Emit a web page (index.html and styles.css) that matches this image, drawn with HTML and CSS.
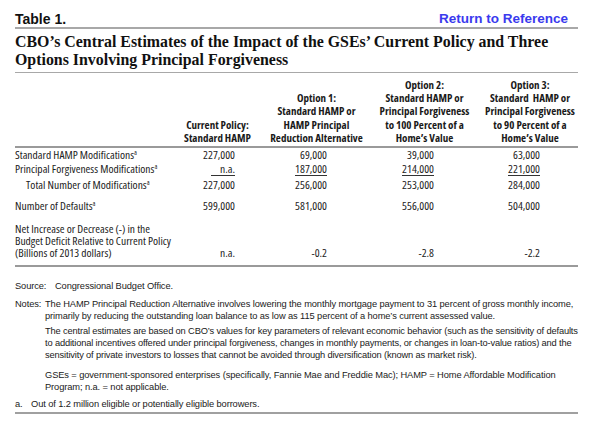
FILE: index.html
```html
<!DOCTYPE html>
<html>
<head>
<meta charset="utf-8">
<link rel="stylesheet" href="styles.css">
</head>
<body>
<div class="page">
  <div class="topbar">
    <span class="tablenum">Table 1.</span>
    <a class="return" href="#">Return to Reference</a>
  </div>
  <h1 class="title">CBO’s Central Estimates of the Impact of the GSEs’ Current Policy and Three Options Involving Principal Forgiveness</h1>

  <table class="data">
    <colgroup>
      <col class="c-label">
      <col class="c-1">
      <col class="c-2">
      <col class="c-3">
      <col class="c-4">
    </colgroup>
    <thead>
      <tr>
        <th></th>
        <th>Current Policy:<br>Standard HAMP</th>
        <th class="h2">Option 1:<br>Standard HAMP or<br>HAMP Principal<br>Reduction Alternative</th>
        <th>Option 2:<br>Standard HAMP or<br>Principal Forgiveness<br>to 100 Percent of a<br>Home’s Value</th>
        <th class="h4">Option 3:<br>Standard&nbsp; HAMP or<br>Principal Forgiveness<br>to 90 Percent of a<br>Home’s Value</th>
      </tr>
    </thead>
    <tbody>
      <tr class="r-first">
        <td class="lbl">Standard HAMP Modifications<sup>a</sup></td>
        <td class="n n1">227,000</td>
        <td class="n n2">69,000</td>
        <td class="n n3">39,000</td>
        <td class="n n4">63,000</td>
      </tr>
      <tr>
        <td class="lbl">Principal Forgiveness Modifications<sup>a</sup></td>
        <td class="n n1"><span class="ul">&nbsp;&nbsp;&nbsp;&nbsp;n.a.</span></td>
        <td class="n n2"><span class="ul">187,000</span></td>
        <td class="n n3"><span class="ul">214,000</span></td>
        <td class="n n4"><span class="ul">221,000</span></td>
      </tr>
      <tr class="r-total">
        <td class="lbl indent">Total Number of Modifications<sup>a</sup></td>
        <td class="n n1">227,000</td>
        <td class="n n2">256,000</td>
        <td class="n n3">253,000</td>
        <td class="n n4">284,000</td>
      </tr>
      <tr class="r-def">
        <td class="lbl">Number of Defaults<sup>a</sup></td>
        <td class="n n1">599,000</td>
        <td class="n n2">581,000</td>
        <td class="n n3">556,000</td>
        <td class="n n4">504,000</td>
      </tr>
      <tr class="r-net">
        <td class="lbl">Net Increase or Decrease (-) in the<br>Budget Deficit Relative to Current Policy<br>(Billions of 2013 dollars)</td>
        <td class="n n1">n.a.</td>
        <td class="n n2">-0.2</td>
        <td class="n n3">-2.8</td>
        <td class="n n4">-2.2</td>
      </tr>
    </tbody>
  </table>

  <div class="notes">
    <div class="note-row src">
      <span class="note-key src-key">Source:</span>
      <span class="note-body">Congressional Budget Office.</span>
    </div>
    <div class="note-row notes-main">
      <span class="note-key">Notes:</span>
      <div class="note-body">
        <p class="p1">The HAMP Principal Reduction Alternative involves lowering the monthly mortgage payment to 31 percent of gross monthly income,<br>primarily by reducing the outstanding loan balance to as low as 115 percent of a home’s current assessed value.</p>
        <p class="p2">The central estimates are based on CBO’s values for key parameters of relevant economic behavior (such as the sensitivity of defaults<br>to additional incentives offered under principal forgiveness, changes in monthly payments, or changes in loan-to-value ratios) and the<br>sensitivity of private investors to losses that cannot be avoided through diversification (known as market risk).</p>
        <p class="p3">GSEs = government-sponsored enterprises (specifically, Fannie Mae and Freddie Mac); HAMP = Home Affordable Modification<br>Program; n.a. = not applicable.</p>
      </div>
    </div>
    <div class="note-row foot">
      <span class="foot-key">a.</span>
      <span class="note-body">Out of 1.2 million eligible or potentially eligible borrowers.</span>
    </div>
  </div>
</div>
</body>
</html>
```

FILE: styles.css
```css
html, body {
  margin: 0;
  padding: 0;
  background: #fff;
}

.page {
  width: 563px;
  margin-left: 15px;
  color: #111;
}

.topbar {
  display: flex;
  justify-content: space-between;
  align-items: flex-end;
  padding-top: 7px;
  padding-right: 10px;
  height: 20px;
  border-bottom: 2px solid #a8a8a8;
}

.tablenum {
  font-family: "Liberation Sans", Arial, sans-serif;
  font-weight: bold;
  font-size: 14px;
  line-height: 16px;
  color: #111;
}

.return {
  font-family: "Liberation Sans", Arial, sans-serif;
  font-weight: bold;
  font-size: 13.5px;
  line-height: 16px;
  color: #3a3aee;
  text-decoration: none;
}

.title {
  margin: 0;
  padding: 4px 0 3px 0;
  font-family: "Liberation Serif", "Times New Roman", serif;
  font-weight: bold;
  font-size: 15.9px;
  line-height: 18px;
  color: #111;
  border-bottom: 1px solid #a8a8a8;
}

.data {
  width: 563px;
  border-collapse: collapse;
  table-layout: fixed;
  margin-top: 5px;
  font-family: "Open Sans", sans-serif;
  font-stretch: 75%;
  font-size: 11.5px;
  color: #222;
}

.c-label { width: 165px; }
.c-1 { width: 75px; }
.c-2 { width: 116px; }
.c-3 { width: 107px; }
.c-4 { width: 100px; }

.data th {
  font-weight: bold;
  font-size: 11px;
  line-height: 13.2px;
  text-align: center;
  vertical-align: bottom;
  padding: 0 0 2px 0;
  border-bottom: 2px solid #9a9a9a;
  color: #1a1a1a;
}

.data th.h2 { padding-left: 7px; }
.data th.h4 { padding-left: 4px; }

.data td {
  padding: 0;
  line-height: 14px;
  vertical-align: bottom;
}

.r-first td { padding-top: 0; }
.r-total td { padding-top: 2px; }
.r-def td { padding-top: 7px; }
.r-net td {
  padding-top: 10px;
  padding-bottom: 5px;
  line-height: 12.2px;
  border-bottom: 2px solid #9a9a9a;
}

.lbl { text-align: left; }
.indent { padding-left: 11px !important; }

.lbl sup {
  font-size: 7px;
  line-height: 0;
  vertical-align: 4px;
}

.n { text-align: right; }
.n1 { padding-right: 20px !important; }
.n2 { padding-right: 44px !important; }
.n3 { padding-right: 44px !important; }
.n4 { padding-right: 38px !important; }

.ul {
  display: inline-block;
  line-height: 13px;
  border-bottom: 1px solid #333;
}

.notes {
  font-family: "Liberation Sans", Arial, sans-serif;
  font-size: 9.3px;
  letter-spacing: -0.1px;
  line-height: 12px;
  color: #1a1a1a;
  padding-top: 13px;
  border-bottom: 2px solid #a0a0a0;
  padding-bottom: 2px;
}

.note-row {
  display: flex;
}

.note-key {
  flex: 0 0 30px;
}

.src-key {
  flex: 0 0 40px;
}

.note-body {
  flex: 1;
  white-space: nowrap;
}

.notes-main {
  margin-top: 6px;
}

.note-body p {
  margin: 0;
}

.p2 {
  margin-top: 3px !important;
  letter-spacing: -0.15px;
}
.p3 { margin-top: 8px !important; }

.foot {
  margin-top: 5px;
}

.foot-key {
  flex: 0 0 16px;
}
```
